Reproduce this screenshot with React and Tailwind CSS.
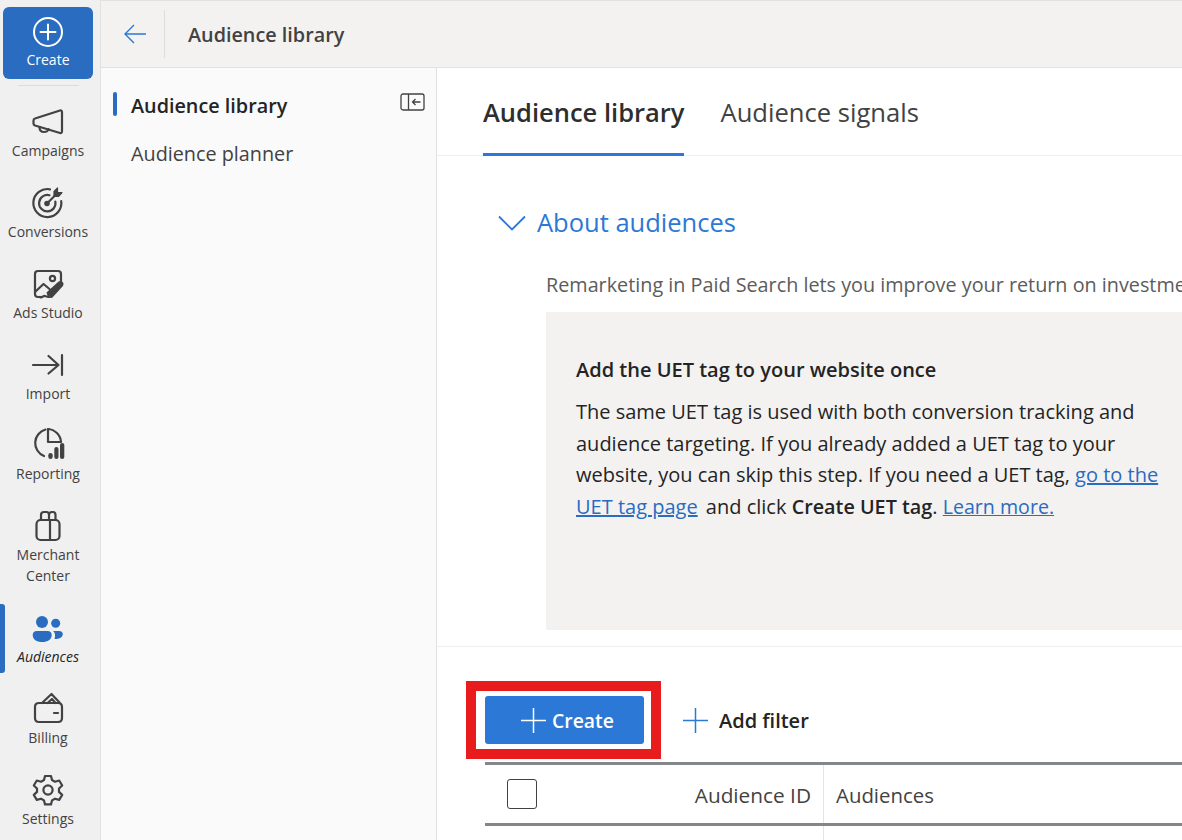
import React from "react";

const ink = "#424242";

function NavIcon({ children }) {
  return (
    <svg width="34" height="34" viewBox="0 0 34 34" fill="none" stroke={ink} strokeWidth="2.200" strokeLinecap="round" strokeLinejoin="round">
      {children}
    </svg>
  );
}

function PlusIcon({ color }) {
  return (
    <svg className="shrink-0" width="25" height="25" viewBox="0 0 25 25" fill="none" stroke={color} strokeWidth="1.500">
      <path d="M12.500 0v25M0 12.500h25" />
    </svg>
  );
}

const navItems = [
  {
    label: "Campaigns",
    icon: (
      <NavIcon>
        <path d="M4 13.500L29 5.500c1-.3 2 .3 2 1.500v19.500c0 1.200-1 1.800-2 1.500L4 20.500c-1.200-.4-1.500-1-1.500-2v-3c0-1 .3-1.700 1.500-2z" />
        <path d="M8.500 22c0 3.500 2 5 4.500 5s4.500-1.500 4.500-3" />
      </NavIcon>
    ),
  },
  {
    label: "Conversions",
    icon: (
      <NavIcon>
        <path d="M19 3.300A14 14 0 1 0 30.200 15" />
        <path d="M18.500 9.300A8.200 8.200 0 1 0 24.300 15.500" />
        <circle cx="16" cy="17.500" r="2.800" fill={ink} stroke="none" />
        <path d="M16.500 17l7-7" />
        <path d="M23 10.500V5.500L26.500 2v4.500H31L27.500 10.500z" fill={ink} strokeWidth="1.200" />
      </NavIcon>
    ),
  },
  {
    label: "Ads Studio",
    icon: (
      <NavIcon>
        <path d="M11 30H7c-1.700 0-3-1.300-3-3V7c0-1.700 1.300-3 3-3h20c1.700 0 3 1.300 3 3v7" />
        <circle cx="21.500" cy="11.500" r="2.600" />
        <path d="M4 25l8.500-8 6 5" />
        <path d="M9 30c2 1.500 3-1.500 5-1s3 1.500 4.500.5" />
        <path d="M17 30.500l-1.500-5L27 15c1.500-1.300 3.500-1.300 4.700 0 1.200 1.300 1 3.200-.2 4.500L21 31z" fill={ink} stroke="none" />
      </NavIcon>
    ),
  },
  {
    label: "Import",
    h: "h-[80px]",
    icon: (
      <NavIcon>
        <path d="M2 17h25.500M17.500 8l10 9-10 8.500M31 7v20" />
      </NavIcon>
    ),
  },
  {
    label: "Reporting",
    icon: (
      <NavIcon>
        <path d="M14.500 1.500A14 14 0 0 0 13 28" />
        <path d="M17 1c7 .5 12.500 6 13 13H17z" />
        <rect x="17.300" y="25" width="4.400" height="6" rx="2.200" fill={ink} stroke="none" />
        <rect x="23.300" y="19" width="4.200" height="12" rx="2.100" fill={ink} stroke="none" />
        <rect x="29" y="15" width="4.300" height="16" rx="2.100" fill={ink} stroke="none" />
      </NavIcon>
    ),
  },
  {
    label: "Merchant Center",
    h: "h-[102px]",
    icon: (
      <NavIcon>
        <rect x="5.500" y="11" width="23" height="20" rx="4" />
        <path d="M19 11v20M10 11V6c0-2 1-3 3-3h2.500c1.500 0 2.500 1 2.500 3v5M18 6c0-2 1-3 3-3h1c1.500 0 2.500 1 2.500 3v5" />
      </NavIcon>
    ),
  },
];

const bottomItems = [
  {
    label: "Billing",
    icon: (
      <NavIcon>
        <path d="M4 15v11c0 2.500 1.500 4 4 4h19c2.500 0 4-1.500 4-4V15c0-2.500-1.500-4-4-4H8c-2.500 0-4 1.500-4 4z" />
        <path d="M11 11l9.500-9 8 8.500M16.500 11l4.500-4 3.500 4" />
        <path d="M23 21h4" />
      </NavIcon>
    ),
  },
  {
    label: "Settings",
    icon: (
      <NavIcon>
        <path d="M14 3h6l1 4 3 1.700 4.200-1.200 3 5-3.200 3v3.400l3.200 3-3 5-4.200-1.200-3 1.700-1 4h-6l-1-4-3-1.700-4.200 1.200-3-5 3.200-3v-3.400l-3.200-3 3-5L10 8.700l3-1.700z" />
        <circle cx="17" cy="17" r="4.600" />
      </NavIcon>
    ),
  },
];

function NavItem({ item }) {
  return (
    <div className={`flex flex-col items-center shrink-0 ${item.h || "h-[81px]"}`}>
      <div className="h-[34px]">{item.icon}</div>
      <span className="text-center text-[14px] leading-[21px] text-[#424242] w-[90px] mt-[1px]">{item.label}</span>
    </div>
  );
}

function Sidebar() {
  return (
    <aside className="relative flex flex-col items-center w-[101px] h-[840px] pr-[4px] bg-[#f0f0f0] border-r border-[#e1e1e1] shrink-0 overflow-hidden">
      <button className="flex flex-col items-center shrink-0 mt-[7px] w-[90px] h-[72px] rounded-[6px] bg-[#2a6cc0] text-white">
        <svg className="mt-[10px]" width="30" height="30" viewBox="0 0 30 30" fill="none" stroke="#fff" strokeWidth="2">
          <circle cx="15" cy="15" r="14" />
          <path d="M15 7.500v15M7.500 15h15" strokeLinecap="round" />
        </svg>
        <span className="text-[14px] leading-[20px] mt-[3px]">Create</span>
      </button>
      <div className="w-[61px] h-px shrink-0 bg-[#dcdcdc] mt-[6px] mb-[19px]" />
      {navItems.map((item) => (
        <NavItem key={item.label} item={item} />
      ))}
      <div className="flex flex-col items-center h-[81px] shrink-0">
        <svg width="34" height="34" viewBox="0 0 34 34" fill="#2a6cc0">
          <circle cx="11" cy="11" r="6" />
          <circle cx="24.700" cy="12.300" r="4.500" />
          <path d="M1.700 24c0-2.500 1.800-4 4-4h11c2.200 0 4 1.500 4 4 0 4.500-4 7-9.500 7s-9.500-2.500-9.500-7z" />
          <path d="M22 20h6c2.200 0 3.800 1.300 3.800 3 0 3-3 5-8.300 5 .5-1.300.700-2.800.500-4.500-.2-1.500-.8-2.600-2-3.500z" />
        </svg>
        <span className="text-[14px] leading-[21px] italic text-[#242424] mt-[1px]">Audiences</span>
      </div>
      {bottomItems.map((item) => (
        <NavItem key={item.label} item={item} />
      ))}
      <span className="absolute left-0 top-[604px] w-[5px] h-[69px] rounded-r-[3px] bg-[#2a6cc0]" />
    </aside>
  );
}

function SubNav() {
  return (
    <nav className="relative w-[336px] shrink-0 bg-[#fafafa] border-r border-[#e1e1e1] pt-[14px]">
      <div className="flex items-center h-[48px] pl-[30px] text-[19.800px] font-semibold text-[#242424]">Audience library</div>
      <div className="flex items-center h-[48px] pl-[30px] text-[19.800px] text-[#424242]">Audience planner</div>
      <span className="absolute left-[12px] top-[24px] w-[4px] h-[24px] rounded-[2px] bg-[#2a6cc0]" />
      <svg className="absolute left-[299px] top-[25px]" width="25" height="18" viewBox="0 0 25 18" fill="none" stroke={ink} strokeWidth="1.300" strokeLinejoin="round">
        <rect x="1" y="1" width="23" height="16" rx="2" />
        <path d="M8.500 1v16M20.500 9h-8M15.500 6l-3 3 3 3" />
      </svg>
    </nav>
  );
}

function Main() {
  return (
    <main className="flex-1 min-w-0 overflow-hidden bg-white">
      <div className="flex h-[88px] pl-[46px] border-b border-[#efefef] gap-[36px]">
        <div className="h-[88px] border-b-[3px] border-[#2b78d6] flex items-center pt-[4px] text-[25.500px] font-semibold text-[#2e2e2e]">Audience library</div>
        <div className="h-[88px] flex items-center pt-[2px] text-[25.600px] text-[#424242]">Audience signals</div>
      </div>
      <div className="flex items-center gap-[11px] pl-[61px] mt-[42px] h-[50px]">
        <svg width="28" height="16" viewBox="0 0 28 16" fill="none" stroke="#2b78d6" strokeWidth="1.800">
          <path d="M1 1.500l13 13 13-13" />
        </svg>
        <span className="text-[25.500px] text-[#2b78d6] mb-[2px]">About audiences</span>
      </div>
      <div className="pl-[109px] mt-[22px] h-[42px] text-[19.800px] leading-[30px] text-[#5c5c5c] whitespace-nowrap">
        Remarketing in Paid Search lets you improve your return on investment by targeting your ads to people who
      </div>
      <div className="ml-[109px] h-[318px] bg-[#f3f2f1] pl-[30px] pt-[41px] text-[20px] leading-[31.500px] text-[#242424] w-[700px]">
        <h3 className="font-semibold leading-[34px] mb-[9px]">Add the UET tag to your website once</h3>
        <p className="w-[600px]">
          The same UET tag is used with both conversion tracking and audience targeting. If you already added a UET tag to your{" "}
          <span>website, you can skip this step. If you need a UET tag,</span>{" "}
          <a className="text-[#2a6cc0] underline">go to the</a>{" "}
          <a className="text-[#2a6cc0] underline">UET tag page</a> <span className="ml-[3px]">and click</span>{" "}
          <b className="font-semibold text-[19.800px]">Create UET tag</b>.{" "}
          <a className="text-[#2a6cc0] underline text-[19.600px]">Learn more.</a>
        </p>
      </div>
      <div className="border-t border-[#efefef] mt-[16px]">
        <div className="flex items-center pl-[29px] mt-[34px] h-[78px]">
          <div className="border-[10px] border-[#e81c1c] bg-white pl-[9px] pr-[7px] py-[5px]">
            <button className="flex items-center gap-[6px] pl-[36px] w-[159px] h-[48px] rounded-[3px] bg-[#2b78d6] text-white text-[19.400px] font-semibold">
              <PlusIcon color="#fff" />
              <span className="pt-[2px]">Create</span>
            </button>
          </div>
          <div className="flex items-center gap-[11px] ml-[22px] text-[20px] font-semibold text-[#242424]">
            <PlusIcon color="#2b78d6" />
            <span className="pt-[2px]">Add filter</span>
          </div>
        </div>
        <div className="ml-[48px] mt-[3px] h-[64px] flex border-y-[3px] border-[#84878a] text-[20.800px] font-medium text-[#424242]">
          <div className="relative w-[339px] flex items-center justify-end pr-[12px] pt-[3px] border-r border-[#e4e4e4]">
            <span className="absolute left-[22px] top-[14px] w-[30px] h-[30px] rounded-[3px] border border-[#424242]" />
            Audience ID
          </div>
          <div className="flex items-center pl-[12px] pt-[3px] text-[20.400px]">Audiences</div>
        </div>
        <div className="ml-[386px] w-px h-[20px] bg-[#e4e4e4]" />
      </div>
    </main>
  );
}

export default function App() {
  return (
    <div className="flex w-[1182px] h-[840px] overflow-hidden font-['Open_Sans',sans-serif]">
      <Sidebar />
      <div className="flex-1 min-w-0 flex flex-col">
        <header className="flex items-center h-[68px] shrink-0 bg-[#f3f2f1] border-y border-[#e1e1e1]">
          <svg className="ml-[23px]" width="22" height="20" viewBox="0 0 22 20" fill="none" stroke="#2b78d6" strokeWidth="1.400">
            <path d="M22 10H1M10 1l-9 9 9 9" />
          </svg>
          <span className="w-px h-[48px] bg-[#dcdcdc] ml-[18px]" />
          <span className="ml-[23px] pt-[2px] text-[19.800px] font-semibold text-[#424242]">Audience library</span>
        </header>
        <div className="flex flex-1 min-h-0">
          <SubNav />
          <Main />
        </div>
      </div>
    </div>
  );
}
